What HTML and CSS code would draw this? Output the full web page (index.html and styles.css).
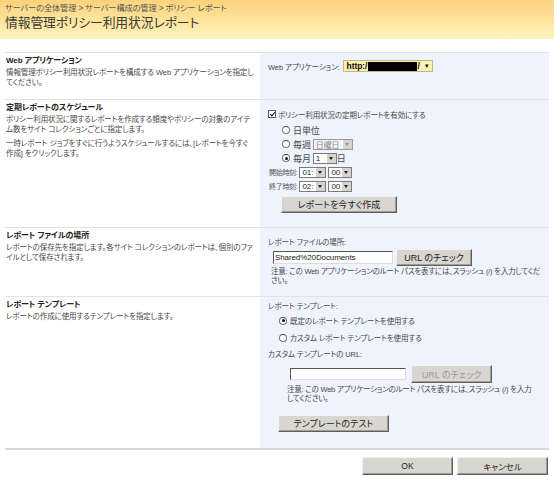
FILE: index.html
```html
<!DOCTYPE html>
<html lang="ja">
<head>
<meta charset="utf-8">
<title>情報管理ポリシー利用状況レポート</title>
<link rel="stylesheet" href="styles.css">
</head>
<body>
<div class="header">
  <div class="crumbs">サーバーの全体管理 &gt; サーバー構成の管理 &gt; ポリシー レポート</div>
  <h1 class="title">情報管理ポリシー利用状況レポート</h1>
</div>

<div class="form">
  <div class="section s1">
    <div class="desc">
      <div class="head">Web アプリケーション</div>
      <p>情報管理ポリシー利用状況レポートを構成する Web アプリケーションを指定してください。</p>
    </div>
    <div class="ctl">
      <div class="line">
        <span class="lbl">Web アプリケーション:</span>
        <span class="appsel"><b>http:/</b><span class="redact"></span><b>/</b><span class="caret">▾</span></span>
      </div>
    </div>
  </div>

  <div class="section s2">
    <div class="desc">
      <div class="head">定期レポートのスケジュール</div>
      <p>ポリシー利用状況に関するレポートを作成する頻度やポリシーの対象のアイテム数をサイト コレクションごとに指定します。</p>
      <p class="p2">一時レポート ジョブをすぐに行うようスケジュールするには、[レポートを今すぐ作成] をクリックします。</p>
    </div>
    <div class="ctl">
      <div class="line"><span class="chk checked"></span>ポリシー利用状況の定期レポートを有効にする</div>
      <div class="opts">
        <div class="line big"><span class="radio"></span>日単位</div>
        <div class="line big"><span class="radio"></span>毎週 <span class="sel dis w38">日曜日<span class="arr"></span></span></div>
        <div class="line big"><span class="radio on"></span>毎月 <span class="sel w24">1<span class="arr"></span></span> 日</div>
      </div>
      <div class="times">
        <div class="line"><span class="tl">開始時刻:</span><span class="sel w26">01:<span class="arr"></span></span><span class="sel w24">00<span class="arr"></span></span></div>
        <div class="line"><span class="tl">終了時刻:</span><span class="sel w26">02:<span class="arr"></span></span><span class="sel w24">00<span class="arr"></span></span></div>
      </div>
      <div class="btnrow run"><span class="btn w116">レポートを今すぐ作成</span></div>
    </div>
  </div>

  <div class="section s3">
    <div class="desc">
      <div class="head">レポート ファイルの場所</div>
      <p>レポートの保存先を指定します。各サイト コレクションのレポートは、個別のファイルとして保存されます。</p>
    </div>
    <div class="ctl">
      <div class="line">レポート ファイルの場所:</div>
      <div class="inrow loc"><span class="input w120">Shared%20Documents</span><span class="btn w76">URL のチェック</span></div>
      <p class="note">注意: この Web アプリケーションのルート パスを表すには、スラッシュ (/) を入力してください。</p>
    </div>
  </div>

  <div class="section s4">
    <div class="desc">
      <div class="head">レポート テンプレート</div>
      <p>レポートの作成に使用するテンプレートを指定します。</p>
    </div>
    <div class="ctl">
      <div class="line">レポート テンプレート:</div>
      <div class="opts2">
        <div class="line"><span class="radio on"></span>既定のレポート テンプレートを使用する</div>
        <div class="line"><span class="radio"></span>カスタム レポート テンプレートを使用する</div>
      </div>
      <div class="line">カスタム テンプレートの URL:</div>
      <div class="inrow tpl"><span class="input w116"></span><span class="btn dis w81">URL のチェック</span></div>
      <p class="note n2">注意: この Web アプリケーションのルート パスを表すには、スラッシュ (/) を入力してください。</p>
      <div class="btnrow test"><span class="btn w111">テンプレートのテスト</span></div>
    </div>
  </div>
</div>

<div class="actions">
  <span class="btn w91">OK</span>
  <span class="btn w91">キャンセル</span>
</div>
</body>
</html>
```

FILE: styles.css
```css
html, body {
  margin: 0;
  padding: 0;
  background: #fff;
}
body {
  width: 554px;
  height: 480px;
  overflow: hidden;
  font-family: "Liberation Sans", "Noto Sans CJK JP", sans-serif;
  font-size: 7.5px;
  letter-spacing: -0.1px;
  color: #333;
  font-feature-settings: "palt";
}
p { margin: 0; }

.header {
  height: 39px;
  box-sizing: border-box;
  padding: 3px 0 0 5px;
  background: linear-gradient(#fbd27d, #fee7a0 60%, #fff1c0);
}
.crumbs {
  font-size: 8.2px;
  color: #555;
  line-height: 11px;
}
.title {
  margin: 0;
  font-weight: normal;
  font-size: 12.8px;
  line-height: 18px;
  color: #3a3a3a;
}

.form {
  margin: 13px 5px 0 5px;
  border-bottom: 2px solid #d8d8d8;
}
.section {
  display: grid;
  grid-template-columns: 255px 289px;
  border-top: 1px solid #e2e2e2;
}
.s1 { height: 46px; }
.s2 { height: 127px; }
.s3 { height: 68px; }
.s4 { height: 151px; }

.desc {
  padding: 2px 4px 0 1px;
  line-height: 9.5px;
  color: #484848;
}
.desc .head {
  font-weight: bold;
  font-size: 8px;
  color: #222;
  margin-bottom: 2px;
  line-height: 11px;
}
.desc p + p { margin-top: 5px; }
.desc .p2 { padding-right: 4px; }

.ctl {
  background: #eff3fd;
  padding: 6px 0 0 8px;
  color: #484848;
}
.line {
  display: flex;
  align-items: center;
  height: 14px;
  white-space: nowrap;
}
.line.big { font-size: 9px; }
.lbl { margin-right: 3px; }

.appsel {
  display: inline-flex;
  align-items: center;
  height: 12px;
  width: 90px;
  box-sizing: border-box;
  background: #fdf0b4;
  border: 1px solid #c8b77a;
  padding: 0 3px;
  font-size: 8.5px;
  color: #111;
}
.redact {
  display: inline-block;
  width: 54px;
  height: 9px;
  background: #000;
  margin: 0 0 0 1px;
}
.caret { margin-left: 5px; font-size: 7px; }

.s2 .ctl { padding-top: 7px; }
.chk {
  width: 8px;
  height: 8px;
  box-sizing: border-box;
  border: 1px solid #555;
  background: #fff;
  margin-right: 2px;
  position: relative;
}
.chk.checked::after {
  content: "";
  position: absolute;
  left: 1.5px;
  top: 0px;
  width: 2px;
  height: 4px;
  border: solid #111;
  border-width: 0 1.5px 1.5px 0;
  transform: rotate(40deg);
}
.radio {
  width: 8px;
  height: 8px;
  box-sizing: border-box;
  border-radius: 50%;
  border: 1px solid #777;
  border-top-color: #444;
  background: #fff;
  margin-right: 3px;
  position: relative;
}
.radio.on::after {
  content: "";
  position: absolute;
  left: 1.5px;
  top: 1.5px;
  width: 3px;
  height: 3px;
  border-radius: 50%;
  background: #111;
}
.opts { padding-left: 14px; margin-top: 2px; }
.opts .line { height: 14px; }

.sel {
  display: inline-flex;
  align-items: center;
  height: 11px;
  box-sizing: border-box;
  border: 1px solid #7a7a7a;
  background: #fff;
  padding-left: 2px;
  font-size: 8px;
  color: #222;
  margin-left: 2px;
  position: relative;
}
.sel.dis { color: #888; border-color: #999; background: #f4f4f4; }
.sel .arr {
  position: absolute;
  right: 0;
  top: 0;
  width: 9px;
  height: 9px;
  background: #d6d3ce;
  border-left: 1px solid #fff;
}
.sel .arr::after {
  content: "";
  position: absolute;
  left: 2px;
  top: 3px;
  border-left: 2.5px solid transparent;
  border-right: 2.5px solid transparent;
  border-top: 3px solid #222;
}
.sel.dis .arr::after { border-top-color: #999; }
.w24 { width: 24px; }
.w26 { width: 27px; }
.w38 { width: 40px; }

.times { padding-left: 1px; }
.times .line { height: 14px; }
.tl { color: #555; font-size: 7px; letter-spacing: -0.3px; }

.btn {
  display: inline-flex;
  align-items: center;
  justify-content: center;
  height: 17px;
  box-sizing: border-box;
  background: #d9d6d0;
  border: 1px solid;
  border-color: #f4f3f1 #5e5e5e #5e5e5e #f4f3f1;
  box-shadow: inset -1px -1px 0 #a09c96;
  font-size: 9px;
  letter-spacing: 0;
  color: #222;
  white-space: nowrap;
}
.btn.dis { color: #999; }
.w116 { width: 116px; }
.w111 { width: 111px; }
.w76 { width: 76px; }
.w81 { width: 81px; }
.w91 { width: 91px; }

.btnrow.run { padding-left: 13px; margin-top: 3px; }

.s3 .ctl { padding-top: 6px; }
.inrow {
  display: flex;
  align-items: center;
  gap: 3px;
}
.input {
  display: inline-flex;
  align-items: center;
  height: 13px;
  box-sizing: border-box;
  border: 1px solid;
  border-color: #555 #ddd #ddd #555;
  background: #fff;
  font-size: 8px;
  color: #222;
  padding-left: 1px;
}
.w120 { width: 120px; }
.inrow.loc { padding-left: 5px; margin-top: 1px; }
.note {
  line-height: 9px;
  padding-left: 3px;
  padding-right: 4px;
  margin-top: 1px;
  letter-spacing: -0.22px;
}

.s4 .ctl { padding-top: 1px; }
.opts2 { padding-left: 11px; }
.opts2 .line { height: 17px; }
.inrow.tpl { padding-left: 22px; margin-top: 5px; gap: 5px; }
.inrow.tpl .input { height: 12px; }
.inrow.tpl .btn { height: 18px; }
.note.n2 { padding-left: 19px; padding-right: 14px; margin-top: 2px; }
.btnrow.test { padding-left: 10px; margin-top: 12px; }

.actions {
  display: flex;
  justify-content: flex-end;
  gap: 4px;
  padding: 7px 6px 0 0;
}
.actions .btn { height: 18px; font-size: 8.5px; }
```
